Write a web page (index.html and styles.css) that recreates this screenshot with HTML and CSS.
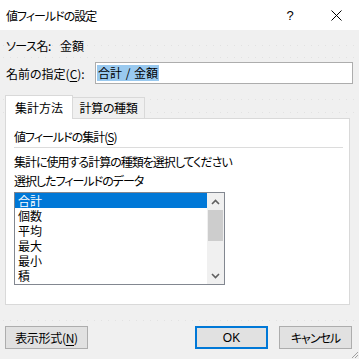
FILE: index.html
```html
<!DOCTYPE html>
<html lang="ja">
<head>
    <meta charset="UTF-8">
    <title>値フィールドの設定</title>
    <link rel="stylesheet" href="styles.css">
</head>
<body>
    <div class="dialog">
        <div class="titlebar">
            <span class="title">値フィールドの設定</span>
            <div class="title-buttons">
                <span class="tb-help">?</span>
                <span class="tb-close">
                    <svg width="11" height="11" viewBox="0 0 11 11"><path d="M0.5 0.5 L10.5 10.5 M10.5 0.5 L0.5 10.5" stroke="#000" stroke-width="1" fill="none"/></svg>
                </span>
            </div>
        </div>

        <div class="content">
            <div class="field source">
                <span class="label source-label">ソース名:</span>
                <span>金額</span>
            </div>

            <div class="field name">
                <span class="label name-label">名前の指定(<u>C</u>):</span>
                <div class="textbox"><span class="sel">合計 / 金額</span></div>
            </div>

            <div class="tabs">
                <div class="tab active">集計方法</div>
                <div class="tab">計算の種類</div>
            </div>
            <div class="panel">
                <div class="group-title tight">値フィールドの集計(<u>S</u>)</div>
                <div class="separator"></div>
                <div class="hint tight">集計に使用する計算の種類を選択してください</div>
                <div class="hint second tight">選択したフィールドのデータ</div>
                <div class="listbox">
                    <ul class="items">
                        <li class="selected">合計</li>
                        <li>個数</li>
                        <li>平均</li>
                        <li>最大</li>
                        <li>最小</li>
                        <li>積</li>
                    </ul>
                    <div class="scrollbar">
                        <div class="arrow">
                            <svg width="9" height="6" viewBox="0 0 9 6"><path d="M1 5 L4.5 1.5 L8 5" stroke="#606060" stroke-width="1.6" fill="none"/></svg>
                        </div>
                        <div class="thumb"></div>
                        <div class="track"></div>
                        <div class="arrow">
                            <svg width="9" height="6" viewBox="0 0 9 6"><path d="M1 1 L4.5 4.5 L8 1" stroke="#606060" stroke-width="1.6" fill="none"/></svg>
                        </div>
                    </div>
                </div>
            </div>

            <div class="buttons">
                <button class="btn format">表示形式(<u>N</u>)</button>
                <div class="right-buttons">
                    <button class="btn ok">OK</button>
                    <button class="btn tight">キャンセル</button>
                </div>
            </div>

            <svg class="grip" width="10" height="10" viewBox="0 0 10 10">
                <path d="M9 3 L3 9 M9 6 L6 9" stroke="#a0a0a0" stroke-width="1" fill="none"/>
            </svg>
        </div>
    </div>
</body>
</html>
```

FILE: styles.css
```css
body, html {
    margin: 0;
    padding: 0;
    width: 359px;
    height: 359px;
    overflow: hidden;
    font-family: "Noto Sans CJK JP", "Noto Sans", sans-serif;
    font-size: 12px;
    color: #000;
}
.dialog {
    width: 359px;
    height: 359px;
    display: flex;
    flex-direction: column;
}
.titlebar {
    height: 30px;
    background: #fff;
    display: flex;
    align-items: center;
    padding-left: 6px;
    flex-shrink: 0;
}
.title {
    font-feature-settings: "palt";
    letter-spacing: -1px;
}
.title-buttons {
    margin-left: auto;
    display: flex;
    height: 30px;
}
.tb-help, .tb-close {
    width: 46px;
    display: flex;
    align-items: center;
    justify-content: center;
}
.tb-help {
    font-family: "Liberation Sans", sans-serif;
    font-size: 13px;
}
.content {
    flex: 1;
    background-color: #f0f0f0;
    background-image:
        linear-gradient(to right, #e2e2e2 1px, transparent 1px),
        linear-gradient(to right, #e2e2e2 1px, transparent 1px),
        linear-gradient(to right, #e2e2e2 1px, transparent 1px),
        linear-gradient(to right, #e2e2e2 1px, transparent 1px),
        linear-gradient(to right, #e2e2e2 1px, transparent 1px);
    background-size: 7px 1px;
    background-repeat: repeat-x;
    background-position: 3px 15px, 3px 27px, 3px 69px, 3px 82px, 3px 290px;
    padding: 0 6px 0 5px;
    display: flex;
    flex-direction: column;
    position: relative;
    font-feature-settings: "palt";
}
.tight {
    letter-spacing: -1px;
}
.field {
    display: flex;
    align-items: center;
}
.field.source {
    height: 20px;
    margin-top: 5px;
    padding-left: 1px;
}
.source-label {
    width: 54px;
    letter-spacing: -0.5px;
}
.field.name {
    height: 22px;
    margin-top: 7px;
    padding-left: 1px;
}
.name-label {
    width: 89px;
}
.textbox {
    flex: 1;
    height: 20px;
    background: #fff;
    border: 1px solid #adadad;
    display: flex;
    align-items: center;
    padding-left: 1px;
}
.sel {
    background: #99c9ef;
    line-height: 16px;
    padding: 0 1px;
    font-feature-settings: normal;
    word-spacing: 1px;
}
.tabs {
    display: flex;
    align-items: flex-end;
    height: 23px;
    margin-top: 11px;
    position: relative;
    z-index: 1;
}
.tab {
    box-sizing: border-box;
    width: 73px;
    height: 21px;
    line-height: 20px;
    border: 1px solid #d9d9d9;
    border-bottom: none;
    background: #f0f0f0;
    text-align: center;
    margin-left: -1px;
    letter-spacing: -0.3px;
}
.tab.active {
    width: 68px;
    height: 24px;
    line-height: 23px;
    background: #fff;
    margin-left: 0;
    margin-bottom: -1px;
    letter-spacing: 0;
    position: relative;
    z-index: 2;
}
.panel {
    height: 185px;
    margin-right: 3px;
    background: #fff;
    border: 1px solid #d9d9d9;
    padding-left: 8px;
    display: flex;
    flex-direction: column;
}
.group-title {
    line-height: 18px;
    margin-top: 9px;
}
.separator {
    height: 1px;
    background: #dcdcdc;
    margin: 1px 6px 0 0;
}
.hint {
    line-height: 18px;
    margin-top: 5px;
}
.hint.second {
    margin-top: 1px;
}
.listbox {
    width: 209px;
    height: 91px;
    border: 1px solid #828790;
    margin-top: 2px;
    display: flex;
    background: #fff;
}
.items {
    list-style: none;
    margin: 0;
    padding: 0;
    width: 192px;
}
.items li {
    height: 15px;
    line-height: 15px;
    padding-left: 3px;
    overflow: hidden;
}
.items li.selected {
    background: #0078d7;
    color: #fff;
}
.scrollbar {
    width: 17px;
    background: #f0f0f0;
    display: flex;
    flex-direction: column;
}
.arrow {
    height: 17px;
    display: flex;
    align-items: center;
    justify-content: center;
}
.thumb {
    height: 31px;
    margin: 0 1px;
    background: #cdcdcd;
}
.track {
    flex: 1;
}
.buttons {
    display: flex;
    margin-top: 21px;
    margin-right: 1px;
}
.btn {
    height: 23px;
    font-family: inherit;
    font-size: 12px;
    font-feature-settings: "palt";
    color: #000;
    background: #e1e1e1;
    border: 1px solid #adadad;
    padding: 0;
}
.btn.format {
    width: 83px;
    letter-spacing: -0.3px;
}
.right-buttons {
    margin-left: auto;
    display: flex;
    gap: 11px;
}
.right-buttons .btn {
    width: 73px;
}
.btn.ok {
    border: 2px solid #0078d7;
    font-family: "Liberation Sans", sans-serif;
}
.grip {
    position: absolute;
    right: 0;
    bottom: 0;
}
u {
    text-decoration-thickness: 1px;
    text-underline-offset: 2px;
}
```
